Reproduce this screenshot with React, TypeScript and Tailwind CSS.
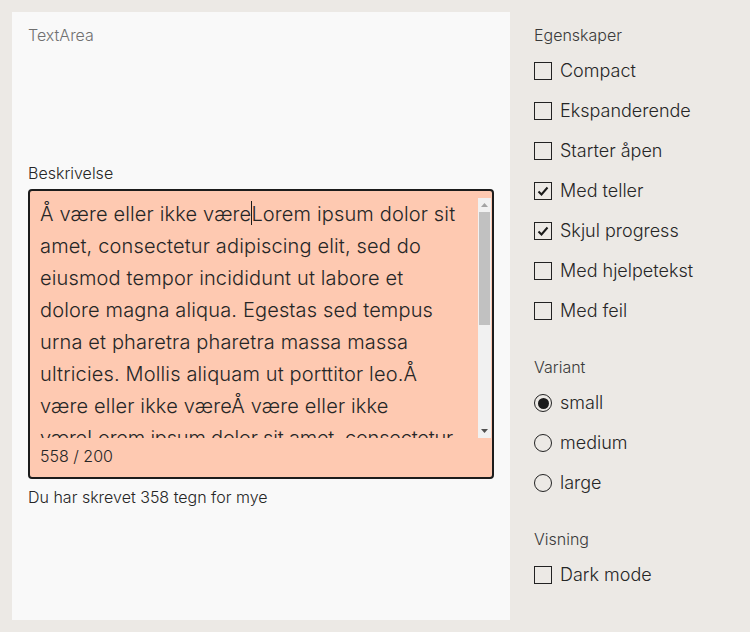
import React from "react";

const TEXT_BEFORE = "Å være eller ikke være";
const TEXT_MIDDLE =
  "Lorem ipsum dolor sit amet, consectetur adipiscing elit, sed do eiusmod tempor incididunt ut labore et dolore magna aliqua. Egestas sed tempus urna et pharetra pharetra massa massa ultricies. Mollis aliquam ut porttitor leo.Å være eller ikke væreÅ være eller ikke ";
const TEXT_TAIL =
  "væreLorem ipsum dolor sit amet, consectetur adipiscing elit, sed do eiusmod tempor incididunt ut labore et dolore magna aliqua. Egestas sed tempus urna et pharetra pharetra massa massa ultricies. Mollis aliquam ut porttitor leo.";

function Checkbox({ label, checked = false }: { label: string; checked?: boolean }) {
  return (
    <label className="flex h-10 items-center gap-2">
      <span className="flex h-[18px] w-[18px] items-center justify-center border-[1.5px] border-[#222] bg-transparent">
        {checked && (
          <svg width="12" height="12" viewBox="0 0 12 12" fill="none">
            <path d="M1.5 6.5 L4.5 9.5 L10.5 2.5" stroke="#1a1a1a" strokeWidth="2" />
          </svg>
        )}
      </span>
      <span className="text-[18px] leading-6 text-[#262626]">{label}</span>
    </label>
  );
}

function Radio({ label, checked = false }: { label: string; checked?: boolean }) {
  return (
    <label className="flex h-10 items-center gap-2">
      <span className="flex h-[18px] w-[18px] items-center justify-center rounded-full border-[1.5px] border-[#222]">
        {checked && <span className="h-[11px] w-[11px] rounded-full bg-[#1a1a1a]" />}
      </span>
      <span className="text-[18px] leading-6 text-[#262626]">{label}</span>
    </label>
  );
}

function Scrollbar() {
  return (
    <div className="flex w-[13px] shrink-0 flex-col items-center bg-[#f1f1f1]">
      <div className="flex h-[14px] items-center justify-center">
        <svg width="7" height="4" viewBox="0 0 7 4">
          <path d="M0 4 L3.5 0 L7 4 Z" fill="#a3a3a3" />
        </svg>
      </div>
      <div className="h-[113px] w-[11px] bg-[#c1c1c1]" />
      <div className="flex-1" />
      <div className="flex h-[14px] items-center justify-center">
        <svg width="7" height="4" viewBox="0 0 7 4">
          <path d="M0 0 L7 0 L3.5 4 Z" fill="#505050" />
        </svg>
      </div>
    </div>
  );
}

export default function App() {
  return (
    <div
      className="flex h-[632px] w-[750px] gap-6 bg-[#ece9e5] p-3 font-light text-[#262626]"
      style={{ fontFamily: "Inter, 'Liberation Sans', sans-serif" }}
    >
      <div className="flex w-[498px] flex-col bg-[#f9f9f9] px-4 pt-3">
        <div className="text-[16px] leading-[22px] text-[#707070]">TextArea</div>
        <div className="mt-[116px] mb-[5px] text-[16px] leading-[22px]">Beskrivelse</div>
        <div className="flex flex-col rounded-[4px] border-2 border-[#1c1c1c] bg-[#fec9b1] pl-[10px] pr-px pt-[7px]">
          <div className="flex h-[240px]">
            <div className="flex-1 overflow-hidden pr-[14px] text-[20px] leading-8 tracking-[0.15px] text-[#262626]">
              {TEXT_BEFORE}
              <span className="inline-block h-[24px] w-px -mr-px bg-[#1a1a1a] align-[-4px]" />
              {TEXT_MIDDLE}
              <span className="tracking-[-0.2px]">{TEXT_TAIL}</span>
            </div>
            <Scrollbar />
          </div>
          <div className="h-[39px] pt-[7px] text-[16px] leading-[22px]">558 / 200</div>
        </div>
        <div className="mt-[7px] text-[16px] leading-[22px]">Du har skrevet 358 tegn for mye</div>
      </div>

      <div className="flex flex-col pt-3">
        <div className="mb-[5px] text-[16px] leading-[22px] text-[#3a3a3a]">Egenskaper</div>
        <Checkbox label="Compact" />
        <Checkbox label="Ekspanderende" />
        <Checkbox label="Starter åpen" />
        <Checkbox label="Med teller" checked />
        <Checkbox label="Skjul progress" checked />
        <Checkbox label="Med hjelpetekst" />
        <Checkbox label="Med feil" />

        <div className="mt-[25px] mb-[5px] text-[16px] leading-[22px] text-[#3a3a3a]">Variant</div>
        <Radio label="small" checked />
        <Radio label="medium" />
        <Radio label="large" />

        <div className="mt-[25px] mb-[5px] text-[16px] leading-[22px] text-[#3a3a3a]">Visning</div>
        <Checkbox label="Dark mode" />
      </div>
    </div>
  );
}
